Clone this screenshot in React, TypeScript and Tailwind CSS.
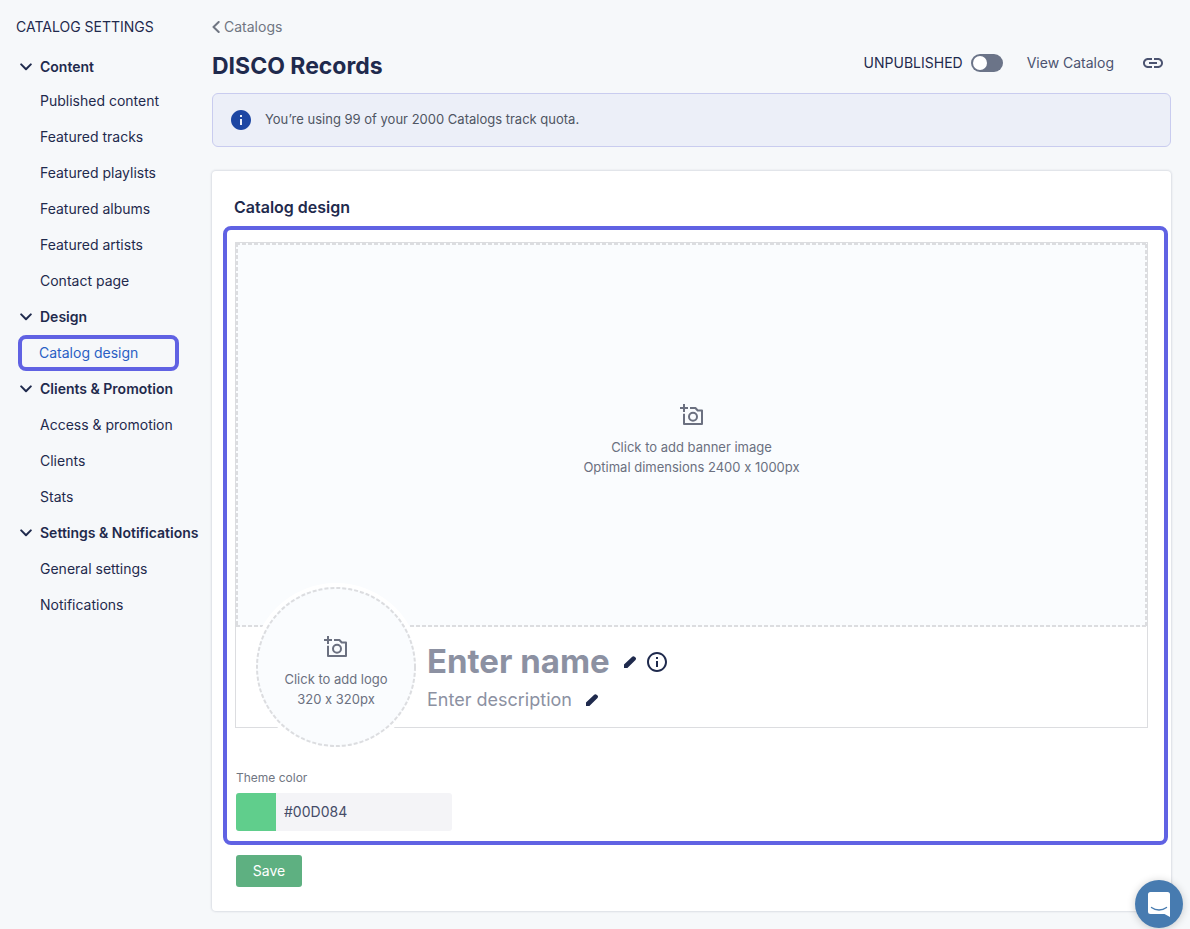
import React from "react";
import { MdLink, MdInfo, MdOutlineInfo } from "react-icons/md";

const sections = [
  {
    title: "Content",
    items: ["Published content", "Featured tracks", "Featured playlists", "Featured albums", "Featured artists", "Contact page"],
  },
  { title: "Design", items: ["Catalog design"] },
  { title: "Clients & Promotion", items: ["Access & promotion", "Clients", "Stats"] },
  { title: "Settings & Notifications", items: ["General settings", "Notifications"] },
];

function Chevron() {
  return (
    <svg viewBox="0 0 12 12" className="size-3 shrink-0" fill="none" stroke="currentColor" strokeWidth="2" strokeLinecap="round" strokeLinejoin="round" aria-hidden="true">
      <path d="M1.2 3.4 6 8.2l4.800-4.800" />
    </svg>
  );
}

function CameraPlus() {
  return (
    <svg viewBox="0 0 24 24" className="size-6" fill="none" stroke="currentColor" strokeWidth="2" aria-hidden="true">
      <path d="M4 1v8M0 5h8" />
      <path d="M10 5h5.400l2.300 2.500H22V21H4V10.800" strokeLinejoin="round" />
      <circle cx="13" cy="13.700" r="4" />
    </svg>
  );
}

function Pencil() {
  return (
    <svg viewBox="0 0 14 14" className="size-[14px]" fill="currentColor" aria-hidden="true">
      <path d="M1 9.600v3.400h3.400l8.100-8c.7-.7.700-1.700 0-2.400l-.9-.9c-.7-.7-1.700-.7-2.400 0z" />
    </svg>
  );
}

function Sidebar() {
  return (
    <nav aria-label="Catalog settings" className="w-[212px] shrink-0 pt-4 text-sm text-[#1f2a4d]">
      <h2 className="h-[35px] pl-4 leading-[22px]">CATALOG SETTINGS</h2>
      {sections.map((section) => (
        <section key={section.title} className="group">
          <button type="button" className="flex h-9 items-center gap-2 pl-5 text-sm font-semibold whitespace-nowrap group-first-of-type:h-8">
            <Chevron />
            {section.title}
          </button>
          <ul>
            {section.items.map((item) =>
              item === "Catalog design" ? (
                <li key={item} className="flex h-9 items-center pl-[18px]">
                  <a href="#design" aria-current="page" className="flex h-9 w-[161px] items-center rounded-lg border-4 border-[#6062e3] pl-[17px] text-[#2a5fc4]">
                    {item}
                  </a>
                </li>
              ) : (
                <li key={item}>
                  <a href="#section" className="flex h-9 items-center pl-10">{item}</a>
                </li>
              ),
            )}
          </ul>
        </section>
      ))}
    </nav>
  );
}

function Header() {
  return (
    <header className="pt-4">
      <a href="#catalogs" className="flex h-[22px] items-center gap-1 text-sm text-[#707682]">
        <svg viewBox="0 0 8 12" className="h-3 w-2" fill="none" stroke="currentColor" strokeWidth="2" strokeLinecap="round" strokeLinejoin="round" aria-hidden="true">
          <path d="M6.700 1 1.500 6l5.200 5" />
        </svg>
        Catalogs
      </a>
      <div className="mt-2 flex h-10 items-center justify-between">
        <h1 className="text-[23px] font-bold text-[#1f2a4d]">DISCO Records</h1>
        <div className="flex items-center pr-[6px] pb-[6px] text-sm">
          <label className="flex items-center gap-2 text-[#1f2a4d]">
            UNPUBLISHED
            <input
              type="checkbox"
              role="switch"
              className="flex h-[18px] w-8 appearance-none items-center rounded-full bg-[#6b7488] px-[2px] before:size-[14px] before:rounded-full before:bg-white checked:justify-end"
            />
          </label>
          <a href="#view" className="ml-6 text-[#4b5370]">View Catalog</a>
          <button type="button" aria-label="Copy link" className="ml-[27px] text-[#4b5370]">
            <MdLink className="size-6" />
          </button>
        </div>
      </div>
    </header>
  );
}

function CatalogPreview() {
  return (
    <div className="relative border border-[#dcdde0] [font-variant-ligatures:no-contextual]">
      <button type="button" className="relative flex h-96 w-full flex-col items-center justify-center bg-[#fafcfe] pt-[10px] text-[13px] leading-5 text-[#6b7080]">
        <svg className="absolute inset-0 size-full" fill="none" stroke="#dcdde0" strokeWidth="4" strokeDasharray="4 2" aria-hidden="true">
          <rect width="100%" height="100%" />
        </svg>
        <CameraPlus />
        <span className="mt-[10px]">Click to add banner image</span>
        <span>Optimal dimensions 2400 x 1000px</span>
      </button>
      <div className="flex h-[100px] flex-col pt-[13px] pl-[191px]">
        <div className="flex h-11 items-center text-[#1f2a4d]">
          <span className="text-[33px] font-bold text-[#8c91a2]">Enter name</span>
          <button type="button" aria-label="Edit name" className="ml-[13px]"><Pencil /></button>
          <button type="button" aria-label="About the name" className="ml-2"><MdOutlineInfo className="size-6" /></button>
        </div>
        <div className="flex h-8 items-center gap-[13px] text-[#1f2a4d]">
          <span className="text-lg text-[#8c91a2]">Enter description</span>
          <button type="button" aria-label="Edit description"><Pencil /></button>
        </div>
      </div>
      <button type="button" className="absolute -bottom-5 left-5 flex size-40 flex-col items-center justify-center rounded-full bg-[#fafcfe] pt-[10px] text-[13px] leading-5 text-[#6b7080] outline-4 outline-white">
        <svg viewBox="0 0 160 160" className="absolute inset-0 size-full" fill="none" stroke="#dcdde0" strokeWidth="2" strokeDasharray="4 2" aria-hidden="true">
          <circle cx="80" cy="80" r="79" />
        </svg>
        <CameraPlus />
        <span className="mt-[10px]">Click to add logo</span>
        <span>320 x 320px</span>
      </button>
    </div>
  );
}

export default function App() {
  return (
    <div className="flex min-h-screen bg-[#f6f8fa] pb-4 font-['Inter','Liberation_Sans',sans-serif]">
      <Sidebar />
      <main className="min-w-0 flex-1 pr-[19px]">
        <Header />
        <div role="status" className="mt-[7px] flex h-[54px] items-center gap-3 rounded-md border border-[#c9ccef] bg-[#eceff8] pl-4 text-[13px] text-[#4f5563]">
          <MdInfo className="size-6 text-[#1d46a3]" />
          You’re using 99 of your 2000 Catalogs track quota.
        </div>
        <section className="mt-6 rounded bg-white pt-6 pr-[3px] pb-6 pl-[11px] shadow-[0_0_2px_1px_rgba(30,40,70,0.12)]">
          <h2 className="pl-[11px] text-base leading-6 font-semibold text-[#1f2a4d]">Catalog design</h2>
          <div className="mt-[7px] rounded-lg border-4 border-[#6062e3] pt-3 pr-4 pb-[10px] pl-2">
            <CatalogPreview />
            <div className="mt-10 pl-px">
              <label htmlFor="theme" className="block text-xs leading-5 text-[#707682]">Theme color</label>
              <div className="mt-[5px] flex h-[38px] w-[216px] overflow-hidden rounded-[3px] bg-[#f4f4f7]">
                <button type="button" aria-label="Pick color" className="w-10 bg-[#60ce8c]" />
                <input id="theme" defaultValue="#00D084" className="min-w-0 flex-1 px-2 text-sm text-[#454c68]" />
              </div>
            </div>
          </div>
          <button type="button" className="mt-[10px] ml-[13px] block h-8 w-[66px] rounded-[3px] bg-[#5eb081] text-sm text-white">Save</button>
        </section>
      </main>
      <button type="button" aria-label="Open chat" className="fixed right-[7px] bottom-[1px] flex size-12 items-center justify-center rounded-full bg-[#477bb0] shadow-[0_1px_8px_rgba(0,0,0,0.2)]">
        <svg viewBox="0 0 22 25" className="h-[25px] w-[22px]" aria-hidden="true">
          <path d="M2.500 0h17a2.500 2.500 0 0 1 2.500 2.500V25l-5.500-3h-14A2.500 2.500 0 0 1 0 19.500v-17A2.500 2.500 0 0 1 2.500 0z" fill="#fff" />
          <path d="M3.500 15.500c4.500 3.300 10.500 3.300 15 0" fill="none" stroke="#477bb0" strokeWidth="1.400" strokeLinecap="round" />
        </svg>
      </button>
    </div>
  );
}
